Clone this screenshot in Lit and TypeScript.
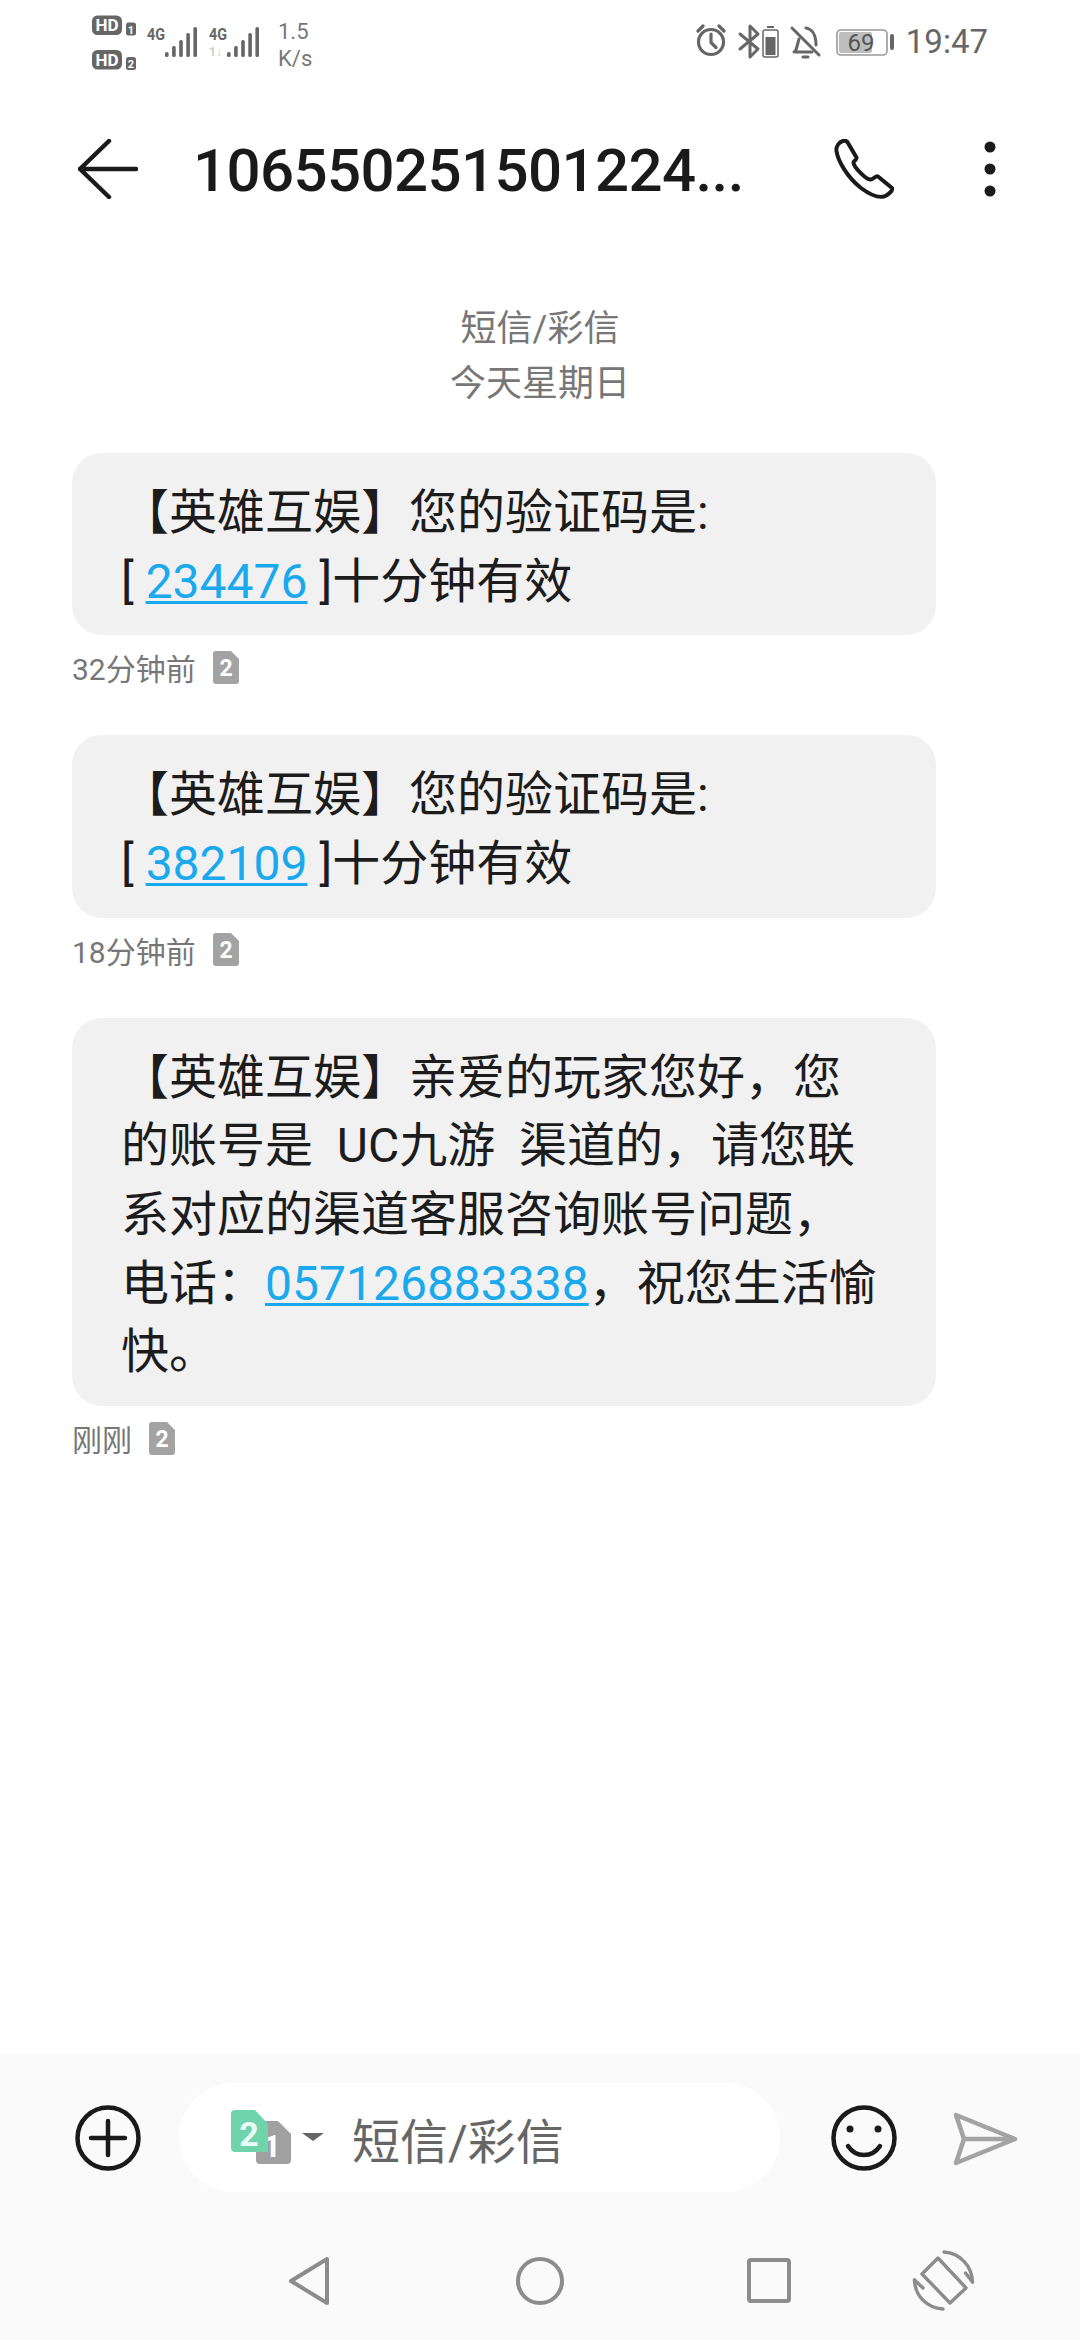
import { LitElement, html, css, svg } from "lit";
import { customElement } from "lit/decorators.js";

const ink = "#1a1a1a";

@customElement("app-root")
export class AppRoot extends LitElement {
  static styles = css`
    :host {
      display: flex;
      flex-direction: column;
      width: 1080px;
      height: 2340px;
      background: #fff;
      font-family: Roboto, "Noto Sans CJK SC", sans-serif;
      color: #1a1a1a;
      overflow: hidden;
    }
    svg { display: block; flex: none; }
    .status {
      height: 85px;
      flex: none;
      display: flex;
      justify-content: space-between;
      align-items: flex-start;
      padding: 0 92px 0 90px;
      color: #666;
    }
    .status-left { display: flex; align-items: flex-start; padding-top: 12px; }
    .speed {
      margin: 6px 0 0 16px;
      font-size: 22px;
      line-height: 27px;
      color: #777;
      text-align: left;
    }
    .status-right { display: flex; align-items: flex-start; padding-top: 24px; }
    .battery { margin: 5px 0 0 13px; }
    .time { font-size: 33px; line-height: 36px; margin-left: 10px; color: #666; }
    .header {
      height: 168px;
      flex: none;
      display: flex;
      align-items: center;
      padding-left: 78px;
    }
    .title {
      width: 548px;
      margin-left: 55px;
      padding-top: 2px;
      font-size: 60px;
      font-weight: 500;
      letter-spacing: -0.6px;
      white-space: nowrap;
      color: #1a1a1a;
    }
    .phone { margin-left: 93px; }
    .dots { margin-left: 89px; }
    .thread { flex: 1; display: flex; flex-direction: column; align-items: flex-start; }
    .stamp {
      align-self: center;
      width: 1080px;
      margin: 49px 0 0;
      text-align: center;
      font-size: 36px;
      line-height: 55px;
      color: #777;
    }
    .bubble {
      width: 864px;
      box-sizing: border-box;
      margin-left: 72px;
      background: #f1f1f2;
      border-radius: 30px;
      padding: 26px 49px 19px;
      font-size: 48px;
      line-height: 68.67px;
      white-space: pre;
      color: #1c1c1c;
    }
    .first { margin-top: 41px; }
    .next { margin-top: 50px; }
    a {
      color: #1aa9ec;
      text-decoration: underline;
      text-underline-offset: 3px;
      text-decoration-thickness: 3px;
    }
    .meta {
      display: flex;
      align-items: center;
      margin: 14px 0 0 72px;
      height: 36px;
      font-size: 30px;
      color: #777;
    }
    .meta svg { margin-left: 17px; }
    .footer { flex: none; height: 286px; background: #fafafa; display: flex; flex-direction: column; }
    .input-row {
      height: 168px;
      flex: none;
      display: flex;
      align-items: flex-start;
      padding: 29px 0 0 75px;
      box-sizing: border-box;
    }
    .plus { margin: 22px 38px 0 0; }
    .pill {
      width: 601px;
      height: 109px;
      flex: none;
      box-sizing: border-box;
      padding-left: 52px;
      background: #fff;
      border-radius: 55px;
      display: flex;
      align-items: center;
      font-size: 48px;
      color: #666;
    }
    .pill span { margin-left: 28px; }
    .smile { margin: 22px 55px 0 51px; }
    .send { margin-top: 29px; }
    .nav { display: flex; align-items: flex-start; padding: 34px 0 0 288px; }
    .nav svg:nth-child(2) { margin-left: 186px; }
    .nav svg:nth-child(3) { margin-left: 183px; }
    .nav svg:nth-child(4) { margin: -7px 0 0 121px; }
  `;

  private badge(label: string, fill: string, w: number, h: number) {
    const c = 8;
    return html`<svg width=${w} height=${h} viewBox="0 0 ${w} ${h}">
      <path d="M3 0H${w - c}L${w} ${c}V${h - 3}a3 3 0 0 1-3 3H3a3 3 0 0 1-3-3V3a3 3 0 0 1 3-3Z" fill=${fill} />
      <text x=${w / 2} y=${h / 2 + 8} text-anchor="middle" font-family="Roboto" font-weight="700" font-size="23" fill="#fff">${label}</text>
    </svg>`;
  }

  private signalBars(x: number) {
    const hs = [5, 11, 17, 24, 30];
    return hs.map(
      (h, i) => svg`<rect x=${x + i * 7.1} y=${45 - h} width="3.6" height=${h} rx="1.6" fill="#666" />`
    );
  }

  private left() {
    return html`<svg width="172" height="60" viewBox="0 0 172 60">
      ${[
        { y: 3.5, n: "1" },
        { y: 38, n: "2" },
      ].map(
        (r) => svg`
        <rect x="2" y=${r.y} width="30" height="19.5" rx="5.5" fill="#666" />
        <text x="17" y=${r.y + 15.5} text-anchor="middle" font-family="Roboto" font-weight="700" font-size="17" fill="#fff">HD</text>
        <rect x="36" y=${r.y + 7} width="10" height="13" rx="2.5" fill="#666" />
        <text x="41" y=${r.y + 18} text-anchor="middle" font-family="Roboto" font-weight="700" font-size="11" fill="#fff">${r.n}</text>`
      )}
      <text x="57" y="28" font-family="Roboto" font-weight="700" font-size="17" fill="#666" textLength="18" lengthAdjust="spacingAndGlyphs">4G</text>
      ${this.signalBars(75)}
      <text x="119" y="28" font-family="Roboto" font-weight="700" font-size="17" fill="#666" textLength="18" lengthAdjust="spacingAndGlyphs">4G</text>
      <text x="119" y="44" font-family="Roboto" font-weight="700" font-size="12" fill="#ccc">1↓</text>
      ${this.signalBars(137)}
    </svg>`;
  }

  private right() {
    return html`<svg width="130" height="40" viewBox="0 0 130 40" fill="none" stroke="#666">
        <g stroke-width="3.2" stroke-linecap="round">
          <circle cx="18" cy="18" r="12.5" />
          <path d="M18 10v8.5l5 5" />
          <path d="M5 7l5-5M31 7l-5-5" />
        </g>
        <path d="M47 10L65 25 57 33V2L65 10 47 25" stroke-width="3" stroke-linejoin="round" stroke-linecap="round" />
        <rect x="70" y="6" width="15" height="27" rx="2" stroke-width="1.5" />
        <path d="M74 3h7" stroke-width="2" />
        <rect x="72.5" y="13" width="10" height="18" fill="#666" stroke="none" />
        <g stroke-width="3" stroke-linecap="round" stroke-linejoin="round">
          <path d="M106 15l-3 11-2 2h18M113 4c6 1 10 7 10 17" />
          <path d="M110 33h5" />
          <path d="M99 4l27 27" />
        </g>
      </svg>
      <svg class="battery" width="60" height="32" viewBox="0 0 60 32">
        <rect x="1" y="1" width="50" height="25" rx="4" fill="#fff" stroke="#999" stroke-width="1.6" />
        <rect x="3" y="3" width="33" height="21" rx="2" fill="#bdbdbd" />
        <rect x="54" y="5" width="4" height="16" rx="2" fill="#666" />
        <text x="25" y="22" text-anchor="middle" font-family="Roboto" font-size="24" fill="#555">69</text>
      </svg>`;
  }

  private msgs = [
    {
      cls: "first",
      body: html`【英雄互娱】您的验证码是:
[ <a>234476</a> ]十分钟有效`,
      time: "32分钟前",
    },
    {
      cls: "next",
      body: html`【英雄互娱】您的验证码是:
[ <a>382109</a> ]十分钟有效`,
      time: "18分钟前",
    },
    {
      cls: "next",
      body: html`【英雄互娱】亲爱的玩家您好，您
的账号是  UC九游  渠道的，请您联
系对应的渠道客服咨询账号问题，
电话：<a>057126883338</a>，祝您生活愉
快。`,
      time: "刚刚",
    },
  ];

  render() {
    return html`
      <div class="status">
        <div class="status-left">
          ${this.left()}
          <div class="speed">1.5<br />K/s</div>
        </div>
        <div class="status-right">
          ${this.right()}
          <div class="time">19:47</div>
        </div>
      </div>
      <div class="header">
        <svg width="60" height="60" viewBox="0 0 60 60" fill="none" stroke=${ink} stroke-width="4.5" stroke-linecap="round" stroke-linejoin="round">
          <path d="M31 2L2 30l29 28M2 30h56" />
        </svg>
        <div class="title">106550251501224...</div>
        <svg class="phone" width="61" height="60" viewBox="0 0 61 60" fill="none" stroke=${ink} stroke-width="4" stroke-linejoin="round">
          <path d="M9 2C5 3 2 7 2.5 12 4 22 13 38 27 49c8 6 17 10 23 8.500 4-1.500 9-5.500 8-8.500L44 37.500c-2-1.500-4 2.500-7.500 3-4.500.5-16.500-12.500-17-16.500-.5-2 3.500-3 3-5.500L14 4c-1-2-3-2.500-5-2Z" />
        </svg>
        <svg class="dots" width="12" height="56" viewBox="0 0 12 56" fill=${ink}>
          <circle cx="6" cy="6" r="5.5" /><circle cx="6" cy="28" r="5.5" /><circle cx="6" cy="50" r="5.5" />
        </svg>
      </div>
      <div class="thread">
        <div class="stamp">短信/彩信<br />今天星期日</div>
        ${this.msgs.map(
          (m) => html`<div class="bubble ${m.cls}">${m.body}</div>
            <div class="meta">${m.time}${this.badge("2", "#a3a3a3", 26, 33)}</div>`
        )}
      </div>
      <div class="footer">
        <div class="input-row">
          <svg class="plus" width="66" height="66" viewBox="0 0 66 66" fill="none" stroke=${ink} stroke-width="4.5" stroke-linecap="round">
            <circle cx="33" cy="33" r="30.5" /><path d="M33 16v34M16 33h34" />
          </svg>
          <div class="pill">
            <svg width="93" height="56" viewBox="0 0 93 56">
              <path d="M25 15a4 4 0 0 1 4-4H47L60 24V50a4 4 0 0 1-4 4H29a4 4 0 0 1-4-4Z" fill="#a0a0a0" />
              <text x="41" y="47" text-anchor="middle" font-family="Roboto" font-weight="700" font-size="32" fill="#fff">1</text>
              <path d="M4 0H24L37 14V42H4a4 4 0 0 1-4-4V4a4 4 0 0 1 4-4Z" fill="#6fd3ac" />
              <text x="18" y="36" text-anchor="middle" font-family="Roboto" font-weight="700" font-size="34" fill="#eafaf4">2</text>
              <path d="M71 23h22l-11 8Z" fill="#666" />
            </svg>
            <span>短信/彩信</span>
          </div>
          <svg class="smile" width="66" height="66" viewBox="0 0 66 66" fill="none" stroke=${ink} stroke-width="4.5" stroke-linecap="round">
            <circle cx="33" cy="33" r="30.5" />
            <path d="M17 41c4 6 10 9 16 9s12-3 16-9" />
            <circle cx="19" cy="24" r="3.500" fill=${ink} stroke="none" />
            <circle cx="47" cy="24" r="3.500" fill=${ink} stroke="none" />
          </svg>
          <svg class="send" width="66" height="54" viewBox="0 0 66 54" fill="none" stroke="#a3a3a3" stroke-width="4.5" stroke-linejoin="round" stroke-linecap="round">
            <path d="M4 3L63 27 4 51l8-24ZM12 27h51" />
          </svg>
        </div>
        <div class="nav">
          <svg width="42" height="50" viewBox="0 0 42 50" fill="none" stroke="#8c8c8c" stroke-width="4" stroke-linejoin="round">
            <path d="M39 3v44L3 25Z" />
          </svg>
          <svg width="48" height="50" viewBox="0 0 48 50" fill="none" stroke="#8c8c8c" stroke-width="4">
            <circle cx="24" cy="25" r="22" />
          </svg>
          <svg width="44" height="50" viewBox="0 0 44 50" fill="none" stroke="#8c8c8c" stroke-width="4" stroke-linejoin="round">
            <rect x="2" y="4" width="40" height="41" rx="2" />
          </svg>
          <svg width="64" height="64" viewBox="0 0 64 64" fill="none" stroke="#8c8c8c" stroke-width="3.4" stroke-linejoin="round" stroke-linecap="round">
            <path d="M26 9L54 39 38 54 10 25Z" />
            <path d="M32 3C48 4 60 17 60.500 33" />
            <path d="M60.500 33l-7-9" />
            <path d="M31 60C15 59 3 47 2.500 31" />
            <path d="M2.500 31l8.500 8" />
          </svg>
        </div>
      </div>
    `;
  }
}
